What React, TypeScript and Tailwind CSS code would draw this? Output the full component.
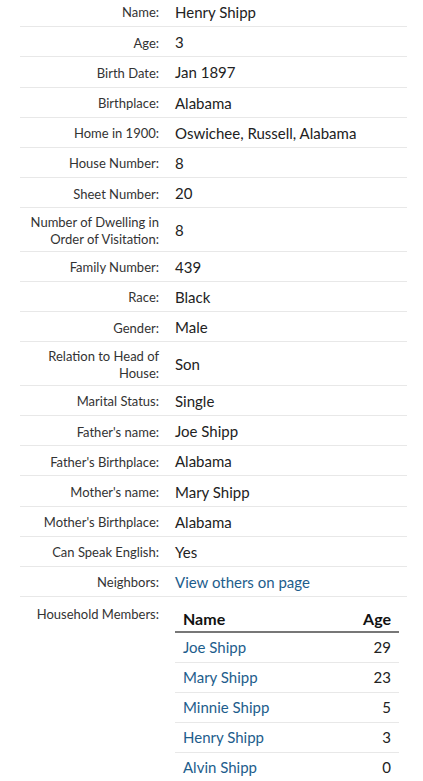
const rows: { label: string; value: string; link?: boolean }[] = [
  { label: 'Name:', value: 'Henry Shipp' },
  { label: 'Age:', value: '3' },
  { label: 'Birth Date:', value: 'Jan 1897' },
  { label: 'Birthplace:', value: 'Alabama' },
  { label: 'Home in 1900:', value: 'Oswichee, Russell, Alabama' },
  { label: 'House Number:', value: '8' },
  { label: 'Sheet Number:', value: '20' },
  { label: 'Number of Dwelling in Order of Visitation:', value: '8' },
  { label: 'Family Number:', value: '439' },
  { label: 'Race:', value: 'Black' },
  { label: 'Gender:', value: 'Male' },
  { label: 'Relation to Head of House:', value: 'Son' },
  { label: 'Marital Status:', value: 'Single' },
  { label: "Father's name:", value: 'Joe Shipp' },
  { label: "Father's Birthplace:", value: 'Alabama' },
  { label: "Mother's name:", value: 'Mary Shipp' },
  { label: "Mother's Birthplace:", value: 'Alabama' },
  { label: 'Can Speak English:', value: 'Yes' },
  { label: 'Neighbors:', value: 'View others on page', link: true },
];

const members = [
  { name: 'Joe Shipp', age: 29 },
  { name: 'Mary Shipp', age: 23 },
  { name: 'Minnie Shipp', age: 5 },
  { name: 'Henry Shipp', age: 3 },
  { name: 'Alvin Shipp', age: 0 },
];

export default function App() {
  return (
    <div className="min-h-screen bg-white font-['Lato','Liberation_Sans',sans-serif] text-[#222]">
      <div className="ml-5 mr-4 -mt-[3px]">
        {rows.map((r) => (
          <div
            key={r.label}
            className="grid grid-cols-[139px_1fr] gap-4 items-center border-b border-[#e8e8e8] pt-[6px] pb-[4px] min-h-[30.2px]"
          >
            <div className="text-right text-[13px] leading-[16.25px] text-[#333]">{r.label}</div>
            <div className={`text-[15px] leading-[19px] ${r.link ? 'text-[#1d5d8c]' : 'text-[#222]'}`}>
              {r.value}
            </div>
          </div>
        ))}
        <div className="grid grid-cols-[139px_1fr] gap-4 pt-[7px]">
          <div className="text-right text-[13px] leading-[17px] text-[#333] pt-[2px]">Household Members:</div>
          <table className="w-[224px] border-collapse text-[15px]">
            <thead>
              <tr className="border-b-2 border-[#777]">
                <th className="text-left text-[16px] font-bold px-2 pt-[3px] pb-0 text-[#111]">Name</th>
                <th className="text-right text-[16px] font-bold px-2 pt-[3px] pb-0 text-[#111]">Age</th>
              </tr>
            </thead>
            <tbody>
              {members.map((m, i) => (
                <tr key={m.name} className={i < members.length - 1 ? 'border-b border-[#e8e8e8]' : ''}>
                  <td className="px-2 h-[30px] text-[#1d5d8c]">{m.name}</td>
                  <td className="px-2 h-[30px] text-right text-[#222]">{m.age}</td>
                </tr>
              ))}
            </tbody>
          </table>
        </div>
      </div>
    </div>
  );
}
